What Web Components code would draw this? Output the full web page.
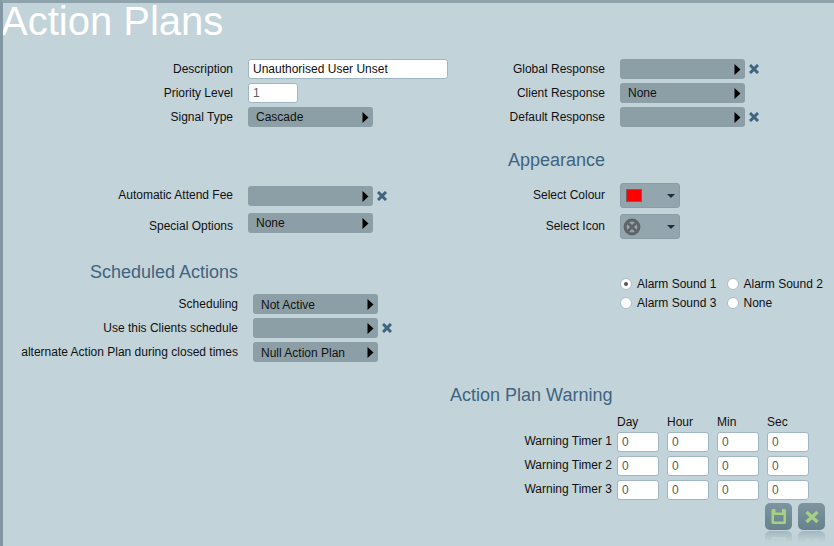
<!DOCTYPE html>
<html>
<head>
<meta charset="utf-8">
<title>Action Plans</title>
<style>
html, body { margin: 0; height: 100%; overflow: hidden; }
body { font: 12px "Liberation Sans", Arial, sans-serif; color: #000; }
</style>
</head>
<body>
<ap-page>
  <ap-title>Action Plans</ap-title>
  <ap-columns>
    <ap-stack slot="left" style="--label-width:230px">
      <ap-field label="Description"><ap-input value="Unauthorised User Unset" width="200" dark></ap-input></ap-field>
      <ap-field label="Priority Level"><ap-input value="1" width="50"></ap-input></ap-field>
      <ap-field label="Signal Type"><ap-select value="Cascade"></ap-select></ap-field>
      <ap-field label="Automatic Attend Fee" shift="up" style="margin-top:55px"><ap-select clearable></ap-select></ap-field>
      <ap-field label="Special Options" shift="down" style="margin-top:3px"><ap-select value="None"></ap-select></ap-field>
      <ap-heading style="margin-top:25px;width:235px">Scheduled Actions</ap-heading>
      <ap-field label="Scheduling" style="--label-width:235px;margin-top:8px"><ap-select value="Not Active" low></ap-select></ap-field>
      <ap-field label="Use this Clients schedule" style="--label-width:235px"><ap-select clearable></ap-select></ap-field>
      <ap-field label="alternate Action Plan during closed times" style="--label-width:235px"><ap-select value="Null Action Plan" low></ap-select></ap-field>
    </ap-stack>
    <ap-stack slot="right" style="--label-width:200px">
      <ap-field label="Global Response"><ap-select clearable></ap-select></ap-field>
      <ap-field label="Client Response"><ap-select value="None"></ap-select></ap-field>
      <ap-field label="Default Response"><ap-select clearable></ap-select></ap-field>
      <ap-heading style="margin-top:19px;width:200px">Appearance</ap-heading>
      <ap-field label="Select Colour" shift="up" style="margin-top:9px"><ap-picker kind="colour"></ap-picker></ap-field>
      <ap-field label="Select Icon" shift="up" style="margin-top:2px"><ap-picker kind="icon"></ap-picker></ap-field>
      <ap-radios style="margin-top:34px">
        <ap-radio checked>Alarm Sound 1</ap-radio>
        <ap-radio>Alarm Sound 2</ap-radio>
        <ap-radio>Alarm Sound 3</ap-radio>
        <ap-radio>None</ap-radio>
      </ap-radios>
      <ap-heading style="margin-top:71px;padding-left:45px;text-align:left">Action Plan Warning</ap-heading>
      <ap-timers style="margin-top:6px"></ap-timers>
      <ap-actions></ap-actions>
    </ap-stack>
  </ap-columns>
</ap-page>

<script>
// small helper so each component only has to hand over its css + markup
class ApBase extends HTMLElement {
    constructor() {
        super();
        this.attachShadow({ mode: 'open' });
    }
    connectedCallback() {
        this.shadowRoot.innerHTML = `<style>${this.css()}</style>${this.html()}`;
    }
    css() { return ':host { display: block; }'; }
    html() { return '<slot></slot>'; }
}

class ApPage extends ApBase {
    css() {
        return `:host {
            display: block; box-sizing: border-box; width: 834px; height: 546px; overflow: hidden;
            background: #c3d3da; border-top: 3px solid #8fa3ad; border-left: 3px solid #8397a2;
        }`;
    }
}

class ApTitle extends ApBase {
    css() {
        return `:host { display: block; height: 56px; margin-left: -2px; font-size: 40px; line-height: 36px; color: #fff; white-space: nowrap; }`;
    }
}

class ApColumns extends ApBase {
    css() {
        return `:host { display: grid; grid-template-columns: 402px 429px; }`;
    }
    html() {
        return '<slot name="left"></slot><slot name="right"></slot>';
    }
}

class ApStack extends ApBase {
    css() {
        return `:host { display: flex; flex-direction: column; gap: 4px; }`;
    }
}

class ApField extends ApBase {
    css() {
        return `
        :host { display: flex; align-items: center; gap: 15px; }
        .label { width: var(--label-width); flex: none; text-align: right; white-space: nowrap; color: #111; }
        .up { padding-bottom: 2px; }
        .down { padding-top: 6px; }
        `;
    }
    html() {
        const shift = this.getAttribute('shift') || '';
        return `<div class="label ${shift}">${this.getAttribute('label')}</div><slot></slot>`;
    }
}

class ApHeading extends ApBase {
    css() {
        return `:host { display: block; height: 20px; font-size: 18px; line-height: 20px; color: #3e6480; text-align: right; white-space: nowrap; }`;
    }
}

class ApInput extends ApBase {
    css() {
        const w = this.getAttribute('width') || 42;
        return `
        :host { display: block; }
        input {
            display: block; box-sizing: border-box; width: ${w}px; height: 20px; margin: 0; padding: 0 4px;
            border: 1px solid #9fb6c4; border-radius: 3px; background: #fff; outline: none;
            font: 12px "Liberation Sans", Arial, sans-serif; color: ${this.hasAttribute('dark') ? '#111' : '#5f5a55'};
        }`;
    }
    html() {
        return `<input type="text" value="${this.getAttribute('value') || ''}">`;
    }
}

class ApSelect extends ApBase {
    css() {
        return `
        :host { display: flex; align-items: center; gap: 4px; }
        .box {
            box-sizing: border-box; width: 125px; height: 20px; padding: 0 3px 0 8px; border-radius: 3px;
            background: #8c9fa7; display: flex; align-items: center; justify-content: space-between;
            line-height: 18px; color: #111;
        }
        :host([low]) .text { padding-top: 2px; }
        svg { display: block; }
        `;
    }
    html() {
        const clear = this.hasAttribute('clearable')
            ? `<svg width="10" height="10" viewBox="0 0 10 10"><path d="M1 1 L9 9 M9 1 L1 9" stroke="#3e6480" stroke-width="3" fill="none"/></svg>`
            : '';
        return `<div class="box"><span class="text">${this.getAttribute('value') || ''}</span>
            <svg width="7" height="11" viewBox="0 0 7 11" style="margin-right:1px"><path d="M0.5 0 L6.5 5.5 L0.5 11 Z" fill="#000"/></svg></div>${clear}`;
    }
}

class ApPicker extends ApBase {
    css() {
        return `
        :host { display: block; }
        .box {
            box-sizing: border-box; width: 60px; height: 25px; padding: 0 4px 0 5px; border: 1px solid #8a9da6; border-radius: 3px;
            background: #93a6ae; display: flex; align-items: center; justify-content: space-between;
        }
        .swatch { box-sizing: border-box; width: 16px; height: 13px; background: #f00; border: 1px solid #7d5a5f; }
        svg { display: block; }
        `;
    }
    html() {
        const kind = this.getAttribute('kind');
        const face = kind === 'colour'
            ? '<div class="swatch"></div>'
            : `<svg width="18" height="18" viewBox="0 0 18 18" style="margin-left:-3px"><circle cx="9" cy="9" r="6.9" fill="none" stroke="#5e6468" stroke-width="3"/><path d="M5 5 L13 13 M13 5 L5 13" stroke="#5e6468" stroke-width="2.8"/></svg>`;
        return `<div class="box">${face}<svg width="8" height="4" viewBox="0 0 8 4"><path d="M0 0 H8 L4 4 Z" fill="#1d2f3e"/></svg></div>`;
    }
}

class ApRadios extends ApBase {
    css() {
        return `:host { display: grid; grid-template-columns: 106.5px auto; row-gap: 5px; justify-content: start; padding-left: 215px; }`;
    }
}

class ApRadio extends ApBase {
    css() {
        return `
        :host { display: flex; align-items: center; gap: 5px; height: 14px; white-space: nowrap; color: #111; }
        .dot {
            box-sizing: border-box; width: 12px; height: 12px; border-radius: 50%; background: #fff; border: 1px solid #aabdc9;
            display: flex; align-items: center; justify-content: center;
        }
        .dot i { width: 4px; height: 4px; border-radius: 50%; background: #555; }
        `;
    }
    html() {
        return `<div class="dot">${this.hasAttribute('checked') ? '<i></i>' : ''}</div><slot></slot>`;
    }
}

class ApTimers extends ApBase {
    css() {
        return `
        :host { display: grid; grid-template-columns: 204px repeat(4, 42px); column-gap: 8px; row-gap: 4px; align-items: center; }
        .head { height: 14px; line-height: 14px; color: #111; margin-bottom: -1px; }
        .name { text-align: right; white-space: nowrap; color: #111; padding-bottom: 3px; margin-right: -3px; }
        `;
    }
    html() {
        const cols = ['', 'Day', 'Hour', 'Min', 'Sec'].map(c => `<div class="head">${c}</div>`).join('');
        const rows = [1, 2, 3].map(n => {
            const cells = '<ap-input value="0"></ap-input>'.repeat(4);
            return `<div class="name">Warning Timer ${n}</div>${cells}`;
        }).join('');
        return cols + rows;
    }
}

class ApActions extends ApBase {
    css() {
        return `
        :host { display: flex; justify-content: flex-end; gap: 6px; padding-right: 9px; margin-top: -1px; }
        button {
            box-sizing: border-box; width: 27px; height: 27px; padding: 0; border: 0; border-radius: 5px;
            background: linear-gradient(#7d959f, #67828e); display: flex; align-items: center; justify-content: center;
            -webkit-box-reflect: below 1px linear-gradient(transparent 58%, rgba(255,255,255,0.35));
        }
        svg { filter: blur(0.3px); }
        `;
    }
    html() {
        return `
        <button><svg width="17" height="17" viewBox="0 0 17 17"><path fill-rule="evenodd" fill="#a8cf82" d="M1.5 2.5 Q1.5 1 3 1 H5.5 V4.5 H12 V1 H14.5 Q16 1 16 2.5 V14.5 Q16 16 14.5 16 H3 Q1.5 16 1.5 14.5 Z M4 7 V13.5 H13.5 V7 Z"/></svg></button>
        <button><svg width="16" height="16" viewBox="0 0 16 16"><path d="M2.5 3 L13.5 13 M13.5 3 L2.5 13" fill="none" stroke="#a8cf82" stroke-width="3.4"/></svg></button>`;
    }
}

customElements.define('ap-page', ApPage);
customElements.define('ap-title', ApTitle);
customElements.define('ap-columns', ApColumns);
customElements.define('ap-stack', ApStack);
customElements.define('ap-field', ApField);
customElements.define('ap-heading', ApHeading);
customElements.define('ap-input', ApInput);
customElements.define('ap-select', ApSelect);
customElements.define('ap-picker', ApPicker);
customElements.define('ap-radios', ApRadios);
customElements.define('ap-radio', ApRadio);
customElements.define('ap-timers', ApTimers);
customElements.define('ap-actions', ApActions);
</script>
</body>
</html>
